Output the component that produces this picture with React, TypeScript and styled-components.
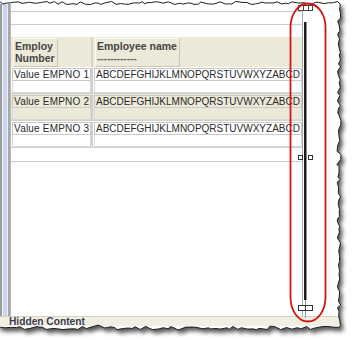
import styled, { createGlobalStyle } from "styled-components"

const GlobalStyle = createGlobalStyle`
  html, body {
    margin: 0;
    padding: 0;
    background: #fff;
  }
  body {
    font-family: "Liberation Sans", Arial, sans-serif;
  }
`

const Page = styled.div`
  position: relative;
  width: 355px;
  height: 340px;
  overflow: hidden;
  background: #fff;
`

const Window = styled.div`
  display: flex;
  flex-direction: column;
  width: 345px;
  height: 322px;
  margin-top: 4px;
`

const Body = styled.div`
  flex: 1;
  display: flex;
  min-height: 0;
`

const Frame = styled.div`
  width: 10px;
  flex-shrink: 0;
  background: linear-gradient(
    to right,
    #9c9c9c 0 2px,
    #f4f6fa 2px 3px,
    #c9d6ec 3px 7px,
    #e6ecf6 7px 8px,
    #a8a8a8 8px 10px
  );
`

const Canvas = styled.div`
  flex: 1;
  padding-top: 7px;
  border-left: 1px solid #b8b8b8;
  background: #fff;
`

const Column = styled.div`
  width: 291px;
  display: flex;
  flex-direction: column;
`

const Band = styled.div`
  height: 12px;
  border-top: 1px solid #cdcdcd;
  border-bottom: 1px solid #cdcdcd;
`

const Spacer = styled.div`
  height: 12px;
`

const HeaderRow = styled.div`
  display: grid;
  grid-template-columns: 82px 1fr;
  height: 30px;
  background: #ece9d8;
`

const HeaderCol = styled.div<{ $first?: boolean }>`
  padding: 1px 0 0 2px;
  border-right: ${(p) => (p.$first ? "2px solid #d8d5c8" : "none")};
`

const HeaderBox = styled.div<{ $w: number }>`
  width: ${(p) => p.$w}px;
  height: 25px;
  padding: 2px 0 0 1px;
  border: 1px solid;
  border-color: #fbfaf4 #cbc7b6 #cbc7b6 #fbfaf4;
  font-size: 10.5px;
  line-height: 11.5px;
  font-weight: bold;
  color: #454545;
`

const Dashes = styled.div`
  letter-spacing: -0.2px;
  color: #666;
`

const Row = styled.div<{ $shade?: boolean }>`
  display: grid;
  grid-template-columns: 82px 1fr;
  height: 27px;
  box-sizing: border-box;
  padding-top: 1px;
  background: ${(p) => (p.$shade ? "#ece9d8" : "#fff")};
  border-bottom: 1px solid #d4d1c6;
`

const Col = styled.div<{ $first?: boolean }>`
  display: flex;
  flex-direction: column;
  padding-left: 1px;
  border-right: ${(p) => (p.$first ? "2px solid #cfcfcf" : "none")};
`

const ValueCell = styled.div<{ $spread?: boolean }>`
  height: 11px;
  border: 1px solid #c9c9c9;
  padding-left: 1px;
  font-size: 10px;
  line-height: 11px;
  letter-spacing: ${(p) => (p.$spread ? "0.2px" : "0")};
  color: #2a2a2a;
  white-space: nowrap;
`

const EmptyCell = styled.div`
  height: 11px;
  border: 1px solid #d8d8d8;
  border-top: none;
`

const TailBand = styled.div`
  height: 13px;
  border-bottom: 1px solid #cdcdcd;
`

const BottomBar = styled.div`
  height: 9px;
  border-top: 1px solid #d6d2bd;
  background: #f1efe2;
  padding-left: 9px;
  font-size: 10.2px;
  line-height: 10px;
  font-weight: bold;
  color: #3b3d52;
  white-space: nowrap;
`

const Overlay = styled.svg`
  position: absolute;
  left: 0;
  top: 0;
  width: 355px;
  height: 340px;
  pointer-events: none;
`

function rng(seed: number) {
  let s = seed
  return () => {
    s = (s * 16807) % 2147483647
    return (s - 1) / 2147483646
  }
}

function tornPath() {
  const r = rng(11)
  const pts: [number, number][] = []
  for (let x = -3; x < 338; x += 2 + r() * 4) pts.push([x, 3 + (r() - 0.5) * 3])
  for (let y = 4; y < 326; y += 2 + r() * 4) pts.push([339 + (r() - 0.5) * 4, y])
  for (let x = 339; x > -3; x -= 2 + r() * 5) {
    const bump = x > 88 && x < 104 ? -2.5 : 0
    pts.push([x, 328 + bump + (r() - 0.5) * 3.5])
  }
  pts.push([-3, 326])
  return "M" + pts.map(([x, y]) => `${x.toFixed(1)},${y.toFixed(1)}`).join("L") + "Z"
}

const TORN = tornPath()
const OUTER = "M-10,-10H365V350H-10Z"

const rows = [1, 2, 3]

export default function App() {
  return (
    <>
      <GlobalStyle />
      <Page>
        <Window>
          <Body>
            <Frame />
            <Canvas>
              <Column>
                <Band />
                <Spacer />
                <HeaderRow>
                  <HeaderCol $first>
                    <HeaderBox $w={42}>
                      Employ
                      <br />
                      Number
                    </HeaderBox>
                  </HeaderCol>
                  <HeaderCol>
                    <HeaderBox $w={82}>
                      Employee name
                      <Dashes>------------</Dashes>
                    </HeaderBox>
                  </HeaderCol>
                </HeaderRow>
                {rows.map((n) => (
                  <Row key={n} $shade={n === 2}>
                    <Col $first>
                      <ValueCell $spread>Value EMPNO {n}</ValueCell>
                      <EmptyCell />
                    </Col>
                    <Col>
                      <ValueCell>ABCDEFGHIJKLMNOPQRSTUVWXYZABCD</ValueCell>
                      <EmptyCell />
                    </Col>
                  </Row>
                ))}
                <TailBand />
              </Column>
            </Canvas>
          </Body>
          <BottomBar>Hidden Content</BottomBar>
        </Window>

        <Overlay viewBox="0 0 355 340">
          <line x1="302.5" y1="3" x2="302.5" y2="316" stroke="#a9a9a9" strokeWidth="1" />
          <rect x="304" y="22" width="2.5" height="278" fill="#1c1c1c" />
          <line x1="305.5" y1="300" x2="305.5" y2="318" stroke="#8a98aa" strokeWidth="1" />
          <rect x="298.5" y="5.5" width="14" height="5" fill="#fff" stroke="#444" />
          <line x1="303.5" y1="5.5" x2="303.5" y2="10.5" stroke="#444" />
          <line x1="308.5" y1="5.5" x2="308.5" y2="10.5" stroke="#444" />
          <rect x="298.5" y="155.5" width="4" height="4" fill="#fff" stroke="#333" />
          <rect x="308.5" y="155.5" width="4" height="4" fill="#fff" stroke="#333" />
          <rect x="298.5" y="305.5" width="14" height="5" fill="#fff" stroke="#333" />
          <line x1="305.5" y1="305.5" x2="305.5" y2="310.5" stroke="#333" />
        </Overlay>

        <Overlay viewBox="0 0 355 340">
          <defs>
            <filter id="soft" x="-10%" y="-10%" width="120%" height="120%">
              <feGaussianBlur stdDeviation="2" />
            </filter>
            <clipPath id="outside">
              <path d={OUTER + TORN} clipRule="evenodd" />
            </clipPath>
          </defs>
          <path d={OUTER + TORN} fill="#fff" fillRule="evenodd" />
          <g clipPath="url(#outside)">
            <path d={TORN} transform="translate(3,4)" fill="#3a3a3a" opacity="0.85" filter="url(#soft)" />
          </g>
          <path d={TORN} fill="none" stroke="#1e1e1e" strokeWidth="1" />
          <rect x="290.5" y="3.5" width="35" height="318" rx="17.5" ry="24" fill="none" stroke="#d41414" strokeWidth="1.8" />
        </Overlay>
      </Page>
    </>
  )
}
